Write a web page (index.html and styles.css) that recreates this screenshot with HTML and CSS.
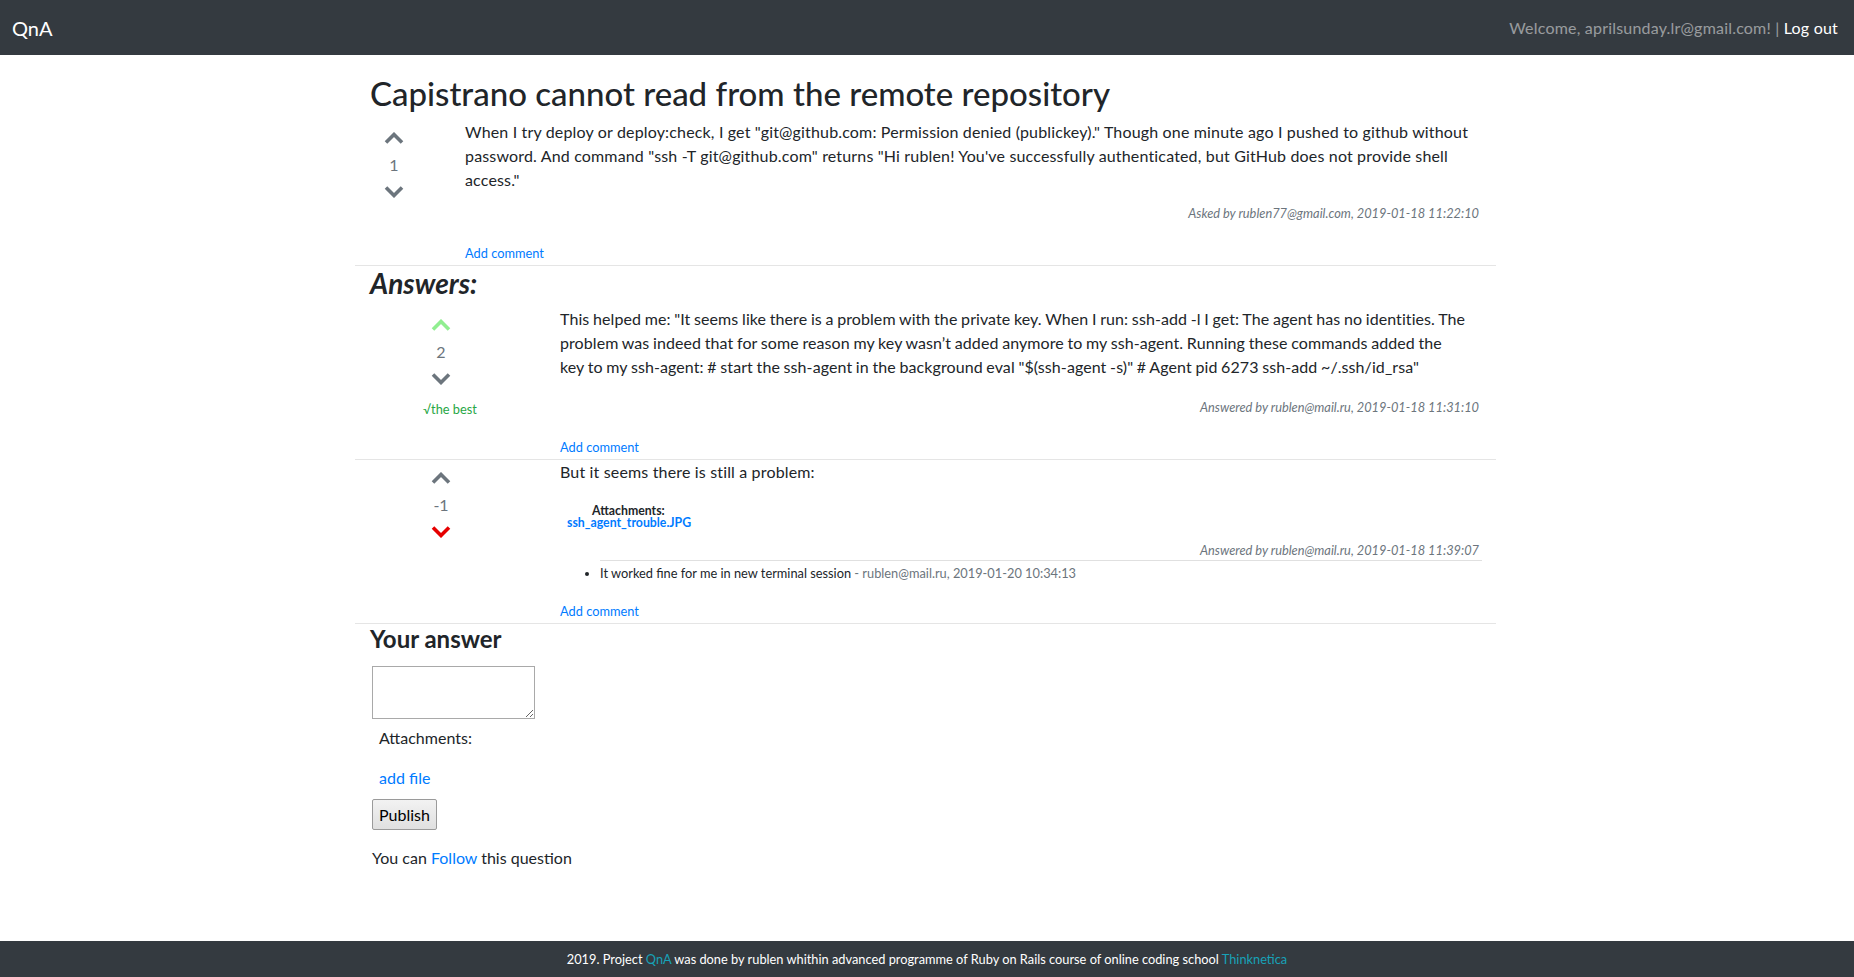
FILE: index.html
```html
<!DOCTYPE html>
<html>
<head>
<meta charset="utf-8">
<title>QnA</title>
<link rel="stylesheet" href="styles.css">
</head>
<body>
<nav class="navbar">
  <a class="brand" href="#">QnA</a>
  <div class="nav-right"><span class="welcome">Welcome, aprilsunday.lr@gmail.com! |</span> <a class="logout" href="#">Log out</a></div>
</nav>

<main class="container">
  <h2 class="title">Capistrano cannot read from the remote repository</h2>

  <div class="post question">
    <div class="vote vote-q">
      <svg class="chev" viewBox="0 0 20 12"><polyline points="2,10.5 10,2.5 18,10.5"/></svg>
      <div class="score">1</div>
      <svg class="chev" viewBox="0 0 20 12"><polyline points="2,1.5 10,9.5 18,1.5"/></svg>
    </div>
    <div class="post-body">
      <p class="text text-q">When I try deploy or deploy:check, I get "git@github.com: Permission denied (publickey)." Though one minute ago I pushed to github without password. And command "ssh -T git@github.com" returns "Hi rublen! You've successfully authenticated, but GitHub does not provide shell access."</p>
      <div class="meta">Asked by rublen77@gmail.com, 2019-01-18 11:22:10</div>
      <a class="add-comment" href="#">Add comment</a>
    </div>
  </div>

  <div class="divider"></div>
  <h3 class="answers-title">Answers:</h3>

  <div class="post answer">
    <div class="vote vote-a">
      <svg class="chev up-green" viewBox="0 0 20 12"><polyline points="2,10.5 10,2.5 18,10.5"/></svg>
      <div class="score">2</div>
      <svg class="chev" viewBox="0 0 20 12"><polyline points="2,1.5 10,9.5 18,1.5"/></svg>
      <div class="best">√the best</div>
    </div>
    <div class="post-body">
      <p class="text text-a1">This helped me: "It seems like there is a problem with the private key. When I run: ssh-add -l I get: The agent has no identities. The problem was indeed that for some reason my key wasn’t added anymore to my ssh-agent. Running these commands added the key to my ssh-agent: # start the ssh-agent in the background eval "$(ssh-agent -s)" # Agent pid 6273 ssh-add ~/.ssh/id_rsa"</p>
      <div class="meta">Answered by rublen@mail.ru, 2019-01-18 11:31:10</div>
      <a class="add-comment" href="#">Add comment</a>
    </div>
  </div>

  <div class="divider"></div>

  <div class="post answer">
    <div class="vote vote-a">
      <svg class="chev" viewBox="0 0 20 12"><polyline points="2,10.5 10,2.5 18,10.5"/></svg>
      <div class="score">-1</div>
      <svg class="chev down-red" viewBox="0 0 20 12"><polyline points="2,1.5 10,9.5 18,1.5"/></svg>
    </div>
    <div class="post-body">
      <p class="text text-a2">But it seems there is still a problem:</p>
      <div class="attachments">
        <div class="att-label">Attachments:</div>
        <a class="att-link" href="#">ssh_agent_trouble.JPG</a>
      </div>
      <div class="meta meta-a2">Answered by rublen@mail.ru, 2019-01-18 11:39:07</div>
      <ul class="comments">
        <li>It worked fine for me in new terminal session <span class="c-meta">- rublen@mail.ru, 2019-01-20 10:34:13</span></li>
      </ul>
      <a class="add-comment add-comment-a2" href="#">Add comment</a>
    </div>
  </div>

  <div class="divider"></div>

  <h4 class="your-answer">Your answer</h4>
  <form class="answer-form">
    <textarea class="answer-input"></textarea>
    <div class="form-att">Attachments:</div>
    <a class="add-file" href="#">add file</a>
    <button class="publish" type="button">Publish</button>
  </form>
  <p class="follow">You can <a href="#">Follow</a> this question</p>
</main>

<footer class="footer">2019. Project <a href="#">QnA</a> was done by rublen whithin advanced programme of Ruby on Rails course of online coding school <a href="#">Thinknetica</a></footer>
</body>
</html>
```
FILE: styles.css
```css
* { box-sizing: border-box; }
html, body { margin: 0; padding: 0; }
body {
  font-family: "Lato", "Open Sans", sans-serif;
  font-size: 16px;
  line-height: 1.5;
  color: #212529;
  background: #fff;
  min-height: 100vh;
  display: flex;
  flex-direction: column;
}
a { color: #007bff; text-decoration: none; }

.navbar {
  height: 55px;
  background: #343a40;
  display: flex;
  align-items: center;
  justify-content: space-between;
  padding: 0 16px 0 12px;
  flex: none;
}
.brand { color: #fff; font-size: 20px; }
.nav-right { font-size: 16px; letter-spacing: 0.2px; }
.welcome { color: rgba(255,255,255,.5); }
.logout { color: #fff; }

.container {
  width: 1140px;
  margin: 0 auto;
  padding: 0 15px;
  flex: 1 0 auto;
}
.title {
  font-size: 33px;
  font-weight: 500;
  line-height: 38px;
  margin: 19px 0 8px -2px;
}

.post { display: flex; }
.vote {
  display: flex;
  flex-direction: column;
  align-items: center;
  padding-top: 12px;
  flex: none;
}
.vote-q { width: 44px; margin-right: 49px; }
.vote-a { width: 138px; margin-right: 50px; }
.chev { width: 20px; height: 12px; display: block; }
.chev polyline { fill: none; stroke: #6c757d; stroke-width: 3.6; }
.chev.up-green polyline { stroke: #90ee90; }
.chev.down-red polyline { stroke: #e60000; }
.score { color: #6c757d; line-height: 24px; margin: 9px 0; }
.best { color: #28a745; font-size: 12.8px; line-height: 19px; margin-top: 15px; padding-left: 18px; }

.post-body { flex: 1; min-width: 0; }
.text { margin: 0; letter-spacing: 0.16px; }
.text-q { margin-bottom: 12px; }
.text-a1 {
  margin-bottom: 19px;
  letter-spacing: 0.08px;
  word-spacing: -0.5px;
  padding-right: 12.5px;
}
.meta {
  text-align: right;
  font-style: italic;
  color: #6c757d;
  font-size: 12.8px;
  line-height: 19px;
  padding-right: 3px;
}
.add-comment {
  display: block;
  width: max-content;
  font-size: 12.8px;
  line-height: 19px;
  margin: 21px 0 2px;
}

.divider {
  border-top: 1px solid rgba(0,0,0,.1);
  margin: 0 -14px 0 -17px;
}
.answers-title {
  font-size: 28px;
  font-weight: 700;
  font-style: italic;
  line-height: 34px;
  margin: 0 0 7px -2px;
}

.attachments { margin-top: 21px; font-size: 12.3px; line-height: 12px; }
.att-label { font-weight: 700; padding-left: 32px; }
.att-link { font-weight: 700; margin-left: 7px; }
.meta-a2 { margin-top: 12px; }
.comments {
  margin: 0;
  padding-left: 40px;
  font-size: 12.8px;
  line-height: 19px;
}
.comments li { border-top: 1px solid rgba(0,0,0,.12); padding-top: 3px; padding-right: 3px; }
.c-meta { color: #6c757d; }
.add-comment-a2 { margin-top: 19px; }

.your-answer {
  font-size: 24px;
  font-weight: 700;
  line-height: 29px;
  margin: 0 0 0 -2px;
}
.answer-form { display: flex; flex-direction: column; align-items: flex-start; }
.answer-input {
  width: 163px;
  height: 53px;
  margin-top: 13px;
  border: 1px solid #a9a9a9;
  resize: both;
}
.form-att { margin: 7px 0 0 7px; }
.add-file { margin: 16px 0 0 7px; }
.publish {
  margin-top: 9px;
  height: 31px;
  padding: 0 6px;
  font-family: inherit;
  font-size: 16px;
  color: #000;
  background: linear-gradient(#f2f2f2, #e0e0e0);
  border: 1px solid #9a9a9a;
  border-radius: 2px;
}
.follow { margin: 16px 0 0; }

.footer {
  height: 36px;
  background: #343a40;
  color: #fff;
  font-size: 12.8px;
  line-height: 36px;
  text-align: center;
  flex: none;
}
.footer a { color: #17a2b8; }
```
